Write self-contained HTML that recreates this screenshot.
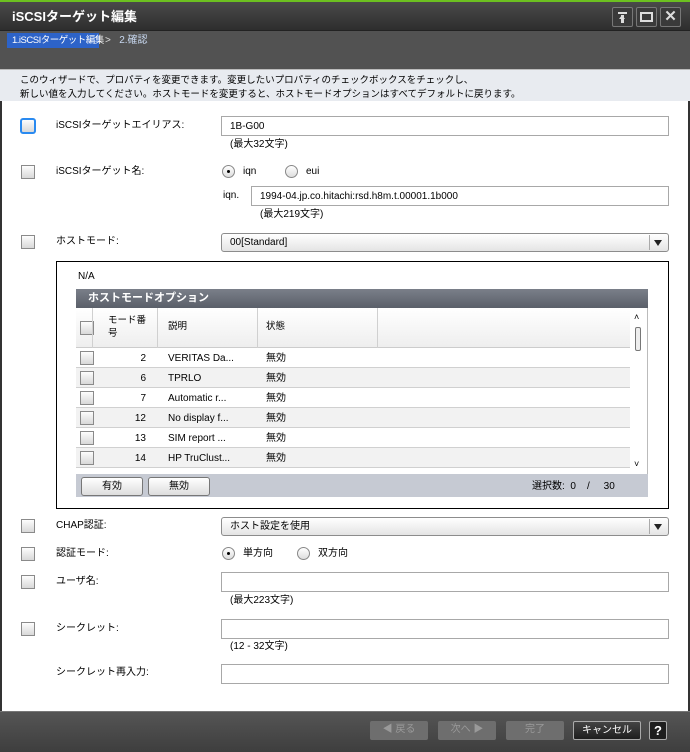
<!DOCTYPE html>
<html><head><meta charset="utf-8"><style>
*{box-sizing:border-box;margin:0;padding:0}
body{width:690px;height:752px;overflow:hidden;font-family:"Liberation Sans","Noto Sans CJK JP",sans-serif;font-size:10px;line-height:12px;color:#000;background:#fff;position:relative}
.a{position:absolute;white-space:nowrap}
.cb{position:absolute;width:14px;height:14px;border:1px solid #8a8a8a;background:linear-gradient(#fdfdfd,#d8d8d8)}
.inp{position:absolute;border:1px solid #a8a8a8;background:#fff;height:20px;padding:4px 0 0 8px;font-size:10px}
.sel{position:absolute;border:1px solid #8c8c8c;border-radius:3px;background:linear-gradient(#fff,#e4e4e4);height:19px;padding:3px 0 0 8px}
.sel:after{content:"";position:absolute;right:6px;top:6px;border-left:4px solid transparent;border-right:4px solid transparent;border-top:6px solid #222}
.sel .d{position:absolute;right:18px;top:1px;bottom:1px;border-left:1px solid #aaa}
.rad{position:absolute;width:13px;height:13px;border:1px solid #888;border-radius:50%;background:linear-gradient(#fff,#ddd)}
.rad.on:after{content:"";position:absolute;left:4px;top:4px;width:3px;height:3px;border-radius:50%;background:#000}
.fb{position:absolute;top:721px;height:19px;border-radius:2px;text-align:center;line-height:17px;font-size:10px}
</style></head><body>
<div class="a" style="left:0;top:0;width:690px;height:30px;background:linear-gradient(#4a4a4a,#2e2e2e);border-top:2px solid #6cc020"></div>
<div class="a" style="left:12px;top:9px;color:#fff;font-weight:bold;font-size:13px;line-height:15px">iSCSIターゲット編集</div>
<div class="a" style="left:612px;top:7px;width:21px;height:20px;border:1px solid #777;border-radius:2px;background:#3a3a3a"><div class="a" style="left:5px;top:4px;width:9px;height:2px;background:#ddd"></div><div class="a" style="left:8px;top:7px;width:3px;height:8px;background:#ddd"></div><div class="a" style="left:6px;top:7px;border-left:3.5px solid transparent;border-right:3.5px solid transparent;border-bottom:4px solid #ddd"></div></div>
<div class="a" style="left:636px;top:7px;width:21px;height:20px;border:1px solid #777;border-radius:2px;background:#3a3a3a"><div class="a" style="left:3px;top:4px;width:13px;height:10px;border:2px solid #ddd"></div></div>
<div class="a" style="left:660px;top:7px;width:21px;height:20px;border:1px solid #777;border-radius:2px;background:#3a3a3a;color:#ddd;font-size:15px;font-weight:bold;text-align:center;line-height:18px">✕</div>
<div class="a" style="left:0;top:30px;width:690px;height:39px;background:#525252;border-top:1px solid #222"></div>
<div class="a" style="left:7px;top:33px;width:92px;height:15px;background:#2d63c8;color:#fff;padding:2px 0 0 5px;font-size:9.5px;letter-spacing:-0.5px">1.iSCSIターゲット編集</div>
<div class="a" style="left:105px;top:35px;color:#ddd">&gt;&nbsp;&nbsp; <span style="color:#c8d8f0">2.確認</span></div>
<div class="a" style="left:0;top:69px;width:690px;height:32px;background:#e8ebf0;border-top:1px solid #bbb;padding:4px 0 0 20px;font-size:9.5px;line-height:14px">このウィザードで、プロパティを変更できます。変更したいプロパティのチェックボックスをチェックし、<br>新しい値を入力してください。ホストモードを変更すると、ホストモードオプションはすべてデフォルトに戻ります。</div>
<div class="a" style="left:0;top:101px;width:2px;height:610px;background:#333"></div>
<div class="a" style="left:688px;top:101px;width:2px;height:610px;background:#333"></div>
<div class="cb" style="left:20px;top:118px;width:16px;height:16px;border:2px solid #2a8af0;border-radius:3px"></div>
<div class="a" style="left:56px;top:120px">iSCSIターゲットエイリアス:</div>
<div class="inp" style="left:221px;top:116px;width:448px">1B-G00</div>
<div class="a" style="left:230px;top:139px">(最大32文字)</div>
<div class="cb" style="left:21px;top:165px"></div>
<div class="a" style="left:56px;top:166px">iSCSIターゲット名:</div>
<div class="rad on" style="left:222px;top:165px"></div><div class="a" style="left:243px;top:166px">iqn</div>
<div class="rad" style="left:285px;top:165px"></div><div class="a" style="left:306px;top:166px">eui</div>
<div class="a" style="left:223px;top:190px">iqn.</div>
<div class="inp" style="left:251px;top:186px;width:418px">1994-04.jp.co.hitachi:rsd.h8m.t.00001.1b000</div>
<div class="a" style="left:260px;top:209px">(最大219文字)</div>
<div class="cb" style="left:21px;top:235px"></div>
<div class="a" style="left:56px;top:236px">ホストモード:</div>
<div class="sel" style="left:221px;top:233px;width:448px">00[Standard]<span class="d"></span></div>
<div class="a" style="left:56px;top:261px;width:613px;height:248px;border:1px solid #000"></div>
<div class="a" style="left:78px;top:271px">N/A</div>
<div class="a" style="left:76px;top:289px;width:572px;height:208px;background:#fff;border:1px solid #bbb"></div>
<div class="a" style="left:76px;top:289px;width:572px;height:19px;background:linear-gradient(#7a7f89,#5a5f69);color:#fff;font-weight:bold;font-size:11px;padding:3px 0 0 12px">ホストモードオプション</div>
<div class="a" style="left:76px;top:308px;width:554px;height:40px;background:linear-gradient(#fff,#eee);border-bottom:1px solid #ccc"></div>
<div class="cb" style="left:80px;top:321px"></div>
<div class="a" style="left:92px;top:308px;width:1px;height:166px;background:#d0d0d0"></div>
<div class="a" style="left:157px;top:308px;width:1px;height:166px;background:#d0d0d0"></div>
<div class="a" style="left:257px;top:308px;width:1px;height:166px;background:#d0d0d0"></div>
<div class="a" style="left:377px;top:308px;width:1px;height:166px;background:#d0d0d0"></div>
<div class="a" style="left:108px;top:314px;font-size:9.5px;line-height:13px">モード番<br>号</div>
<div class="a" style="left:168px;top:321px;font-size:9.5px">説明</div>
<div class="a" style="left:266px;top:321px;font-size:9.5px">状態</div>
<div class="a" style="left:76px;top:348px;width:554px;height:126px;background:repeating-linear-gradient(#fff 0 20px,#f2f2f2 20px 40px)"></div>
<div class="a" style="left:76px;top:367px;width:554px;height:1px;background:#d0d0d0;box-shadow:0 20px #d0d0d0,0 40px #d0d0d0,0 60px #d0d0d0,0 80px #d0d0d0,0 100px #d0d0d0"></div>
<div class="cb" style="left:80px;top:351px"></div><div class="a" style="left:92px;top:353px;width:54px;text-align:right">2</div><div class="a" style="left:168px;top:353px">VERITAS Da...</div><div class="a" style="left:266px;top:353px">無効</div>
<div class="cb" style="left:80px;top:371px"></div><div class="a" style="left:92px;top:373px;width:54px;text-align:right">6</div><div class="a" style="left:168px;top:373px">TPRLO</div><div class="a" style="left:266px;top:373px">無効</div>
<div class="cb" style="left:80px;top:391px"></div><div class="a" style="left:92px;top:393px;width:54px;text-align:right">7</div><div class="a" style="left:168px;top:393px">Automatic r...</div><div class="a" style="left:266px;top:393px">無効</div>
<div class="cb" style="left:80px;top:411px"></div><div class="a" style="left:92px;top:413px;width:54px;text-align:right">12</div><div class="a" style="left:168px;top:413px">No display f...</div><div class="a" style="left:266px;top:413px">無効</div>
<div class="cb" style="left:80px;top:431px"></div><div class="a" style="left:92px;top:433px;width:54px;text-align:right">13</div><div class="a" style="left:168px;top:433px">SIM report ...</div><div class="a" style="left:266px;top:433px">無効</div>
<div class="cb" style="left:80px;top:451px"></div><div class="a" style="left:92px;top:453px;width:54px;text-align:right">14</div><div class="a" style="left:168px;top:453px">HP TruClust...</div><div class="a" style="left:266px;top:453px">無効</div>
<div class="a" style="left:634px;top:311px;font-size:9px">˄</div>
<div class="a" style="left:635px;top:327px;width:6px;height:24px;border:1px solid #777;border-radius:2px;background:#eee"></div>
<div class="a" style="left:634px;top:458px;font-size:9px">˅</div>
<div class="a" style="left:76px;top:474px;width:572px;height:23px;background:#c6cad3"></div>
<div class="a" style="left:81px;top:477px;width:62px;height:19px;border:1px solid #777;border-radius:3px;background:linear-gradient(#fff,#ddd);text-align:center;line-height:17px">有効</div>
<div class="a" style="left:148px;top:477px;width:62px;height:19px;border:1px solid #777;border-radius:3px;background:linear-gradient(#fff,#ddd);text-align:center;line-height:17px">無効</div>
<div class="a" style="left:532px;top:481px">選択数:&nbsp;&nbsp;0&nbsp;&nbsp;&nbsp;&nbsp;/&nbsp;&nbsp;&nbsp;&nbsp;&nbsp;30</div>
<div class="cb" style="left:21px;top:519px"></div><div class="a" style="left:56px;top:520px">CHAP認証:</div>
<div class="sel" style="left:221px;top:517px;width:448px">ホスト設定を使用<span class="d"></span></div>
<div class="cb" style="left:21px;top:547px"></div><div class="a" style="left:56px;top:548px">認証モード:</div>
<div class="rad on" style="left:222px;top:547px"></div><div class="a" style="left:243px;top:548px">単方向</div>
<div class="rad" style="left:297px;top:547px"></div><div class="a" style="left:318px;top:548px">双方向</div>
<div class="cb" style="left:21px;top:575px"></div><div class="a" style="left:56px;top:576px">ユーザ名:</div>
<div class="inp" style="left:221px;top:572px;width:448px"></div>
<div class="a" style="left:230px;top:595px">(最大223文字)</div>
<div class="cb" style="left:21px;top:622px"></div><div class="a" style="left:56px;top:623px">シークレット:</div>
<div class="inp" style="left:221px;top:619px;width:448px"></div>
<div class="a" style="left:230px;top:641px">(12 - 32文字)</div>
<div class="a" style="left:56px;top:667px">シークレット再入力:</div>
<div class="inp" style="left:221px;top:664px;width:448px"></div>
<div class="a" style="left:0;top:711px;width:690px;height:41px;background:linear-gradient(#555,#3e3e3e);border-top:1px solid #777"></div>
<div class="fb" style="left:370px;width:58px;background:#6e6e6e;color:#9a9a9a">◀ 戻る</div>
<div class="fb" style="left:438px;width:58px;background:#6e6e6e;color:#9a9a9a">次へ ▶</div>
<div class="fb" style="left:506px;width:58px;background:#6e6e6e;color:#9a9a9a">完了</div>
<div class="fb" style="left:573px;width:68px;background:linear-gradient(#444,#1e1e1e);border:1px solid #aaa;color:#fff">キャンセル</div>
<div class="fb" style="left:649px;width:18px;background:#1e1e1e;border:1px solid #aaa;color:#fff;font-weight:bold;font-size:13px">?</div>
</body></html>
